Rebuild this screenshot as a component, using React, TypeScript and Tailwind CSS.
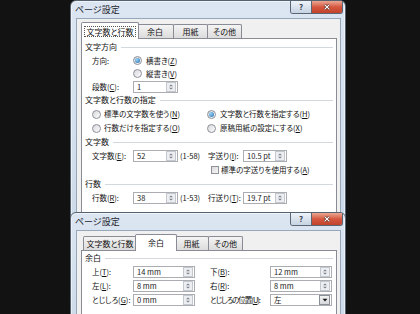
import React from "react";

const jp = "font-['Noto_Sans_CJK_JP','Noto_Sans',sans-serif] [font-feature-settings:'palt']";

function Acc({ t, k, colon }: { t: string; k: string; colon?: boolean }) {
  return (
    <span className="whitespace-nowrap">
      {t}(<span className="underline underline-offset-1">{k}</span>){colon ? ":" : ""}
    </span>
  );
}

function Radio({ on }: { on?: boolean }) {
  return (
    <span className="flex h-[9px] w-[9px] shrink-0 items-center justify-center rounded-full border border-[#8c9099] bg-gradient-to-br from-[#d6d8dc] to-[#fdfdfd]">
      {on && <span className="h-[5px] w-[5px] rounded-full bg-[radial-gradient(circle_at_35%_35%,#9ad6f7,#1d66ad)]" />}
    </span>
  );
}

function Check() {
  return <span className="h-[8px] w-[8px] shrink-0 border border-[#8f9399] bg-gradient-to-br from-[#d9dadc] to-[#f7f7f7]" />;
}

function Spin() {
  return (
    <span className="flex h-[10px] w-[10px] shrink-0 border border-[#c3c7ce] bg-[#eceef1]">
      <svg viewBox="0 0 10 10" className="h-full w-full">
        <path d="M2.5 4.2 L5 1.8 L7.5 4.2Z M2.5 5.8 L5 8.2 L7.5 5.8Z" fill="#7a8290" />
      </svg>
    </span>
  );
}

function Drop() {
  return (
    <span className="flex h-[10px] w-[11px] shrink-0 items-center justify-center border border-[#8a8f98] bg-gradient-to-b from-[#f3f3f3] to-[#d6d8dc]">
      <svg viewBox="0 0 10 10" className="h-[8px] w-[8px]">
        <path d="M2 3.5 L8 3.5 L5 7Z" fill="#111" />
      </svg>
    </span>
  );
}

function Field({ v, w, select }: { v: string; w: string; select?: boolean }) {
  return (
    <div className={`flex h-[12px] shrink-0 items-center justify-between border border-[#abadb3] bg-white pl-[3px] pr-px ${w}`}>
      <span className="text-[7.5px] leading-none text-[#222]">{v}</span>
      {select ? <Drop /> : <Spin />}
    </div>
  );
}

function Heading({ t, h }: { t: string; h: string }) {
  return (
    <div className={`flex items-center gap-[4px] px-[3px] text-[8px] ${h}`}>
      <span>{t}</span>
      <span className="h-px flex-1 bg-[#d3d8de]" />
    </div>
  );
}

function Tabs({ sel }: { sel: number }) {
  const tabs = [
    { t: "文字数と行数", w: "w-[54px]", ws: "w-[58px]" },
    { t: "余白", w: "w-[38px]", ws: "w-[42px]" },
    { t: "用紙", w: "w-[35px]", ws: "w-[39px]" },
    { t: "その他", w: "w-[35px]", ws: "w-[39px]" },
  ];
  return (
    <div className="flex h-[19px] items-end pl-[6px] text-[8px]">
      {tabs.map((tab, i) =>
        i === sel ? (
          <div
            key={i}
            className={`relative z-10 -mx-[2px] -mb-px flex h-[17px] items-center justify-center rounded-t-[2px] border border-b-0 border-[#898c95] bg-white ${tab.ws}`}
          >
            <span className={sel === 0 ? "border border-dotted border-[#555] px-[1px] leading-[9px]" : ""}>{tab.t}</span>
          </div>
        ) : (
          <div
            key={i}
            className={`flex h-[14px] items-center justify-center rounded-t-[2px] border border-b-0 border-[#898c95] bg-gradient-to-b from-[#f4f4f4] to-[#dcdcdc] ${tab.w} ${i > 0 ? "-ml-px" : ""}`}
          >
            {tab.t}
          </div>
        )
      )}
    </div>
  );
}

function Win({ pos, sel, children }: { pos: string; sel: number; children: React.ReactNode }) {
  return (
    <div
      className={`absolute left-[70px] flex w-[276px] flex-col rounded-t-[6px] border border-[#56626f] bg-gradient-to-b from-[#dce6f2] to-[#ccd9e8] shadow-[inset_0_0_0_1px_rgba(255,255,255,0.55)] ${pos}`}
    >
      <div className="flex h-[17px] items-center pl-[4px] text-[9px] text-[#1e2630]">ページ設定</div>
      <div className="absolute right-[2px] top-0 flex h-[13px] overflow-hidden rounded-b-[3px] border border-t-0 border-[#5b6675]">
        <div className="flex w-[20px] items-center justify-center bg-gradient-to-b from-[#eef3f9] to-[#c6d3e2] text-[8px] font-bold text-[#3a4350]">?</div>
        <div className="flex w-[31px] items-center justify-center border-l border-[#5b6675] bg-gradient-to-b from-[#eaa795] via-[#d5573f] to-[#c2432c]">
          <svg viewBox="0 0 12 10" className="h-[8px] w-[10px]">
            <path d="M3 2 L9 8 M9 2 L3 8" stroke="#5a1c12" strokeWidth="3" />
            <path d="M3 2 L9 8 M9 2 L3 8" stroke="#fff" strokeWidth="1.6" />
          </svg>
        </div>
      </div>
      <div className="ml-[5px] mr-[4px] flex flex-1 flex-col border border-[#97a7ba] bg-[#f0f0f0]">
        <Tabs sel={sel} />
        <div className="ml-[4px] mr-[3px] flex-1 border border-[#898c95] bg-white">{children}</div>
      </div>
    </div>
  );
}

function Label({ children, w }: { children?: React.ReactNode; w: string }) {
  return <span className={`shrink-0 whitespace-nowrap ${w}`}>{children}</span>;
}

export default function App() {
  return (
    <div className={`relative h-[314px] w-[420px] overflow-hidden bg-[#121212] text-[7.5px] leading-none text-[#111] ${jp}`}>
      <Win pos="top-0 h-[240px]" sel={0}>
        <div className="pt-px">
          <Heading t="文字方向" h="h-[14px]" />
          <div className="flex h-[13px] items-center pl-[10px]">
            <Label w="w-[41px]">方向:</Label>
            <Radio on />
            <span className="ml-[4px]"><Acc t="横書き" k="Z" /></span>
          </div>
          <div className="flex h-[13px] items-center pl-[10px]">
            <Label w="w-[41px]" />
            <Radio />
            <span className="ml-[4px]"><Acc t="縦書き" k="V" /></span>
          </div>
          <div className="flex h-[13px] items-center pl-[10px]">
            <Label w="w-[41px]"><Acc t="段数" k="C" colon /></Label>
            <Field v="1" w="w-[45px]" />
          </div>
          <Heading t="文字数と行数の指定" h="h-[14px]" />
          <div className="flex h-[14px] items-center pl-[10px]">
            <div className="flex w-[115px] items-center gap-[3px]">
              <Radio />
              <Acc t="標準の文字数を使う" k="N" />
            </div>
            <div className="flex items-center gap-[4px]">
              <Radio on />
              <Acc t="文字数と行数を指定する" k="H" />
            </div>
          </div>
          <div className="flex h-[14px] items-center pl-[10px]">
            <div className="flex w-[115px] items-center gap-[3px]">
              <Radio />
              <Acc t="行数だけを指定する" k="O" />
            </div>
            <div className="flex items-center gap-[4px]">
              <Radio />
              <Acc t="原稿用紙の設定にする" k="X" />
            </div>
          </div>
          <Heading t="文字数" h="h-[14px]" />
          <div className="flex h-[14px] items-center pl-[10px]">
            <Label w="w-[41px]"><Acc t="文字数" k="E" colon /></Label>
            <Field v="52" w="w-[45px]" />
            <Label w="w-[30px] pl-[2px]">(1-58)</Label>
            <Label w="w-[35px]"><Acc t="字送り" k="I" colon /></Label>
            <Field v="10.5 pt" w="w-[44px]" />
          </div>
          <div className="flex h-[14px] items-center gap-[2px] pl-[129px]">
            <Check />
            <Acc t="標準の字送りを使用する" k="A" />
          </div>
          <Heading t="行数" h="h-[14px]" />
          <div className="flex h-[14px] items-center pl-[10px]">
            <Label w="w-[41px]"><Acc t="行数" k="R" colon /></Label>
            <Field v="38" w="w-[45px]" />
            <Label w="w-[30px] pl-[2px]">(1-53)</Label>
            <Label w="w-[35px]"><Acc t="行送り" k="T" colon /></Label>
            <Field v="19.7 pt" w="w-[44px]" />
          </div>
        </div>
      </Win>
      <Win pos="top-[212px] h-[120px]" sel={1}>
        <Heading t="余白" h="h-[14px]" />
        <div className="flex h-[14px] items-center pl-[10px]">
          <Label w="w-[41px]"><Acc t="上" k="T" colon /></Label>
          <Field v="14 mm" w="w-[62px]" />
          <Label w="w-[15px]" />
          <Label w="w-[60px]"><Acc t="下" k="B" colon /></Label>
          <Field v="12 mm" w="w-[62px]" />
        </div>
        <div className="flex h-[14px] items-center pl-[10px]">
          <Label w="w-[41px]"><Acc t="左" k="L" colon /></Label>
          <Field v="8 mm" w="w-[62px]" />
          <Label w="w-[15px]" />
          <Label w="w-[60px]"><Acc t="右" k="R" colon /></Label>
          <Field v="8 mm" w="w-[62px]" />
        </div>
        <div className="flex h-[14px] items-center pl-[10px]">
          <Label w="w-[41px]"><Acc t="とじしろ" k="G" colon /></Label>
          <Field v="0 mm" w="w-[62px]" />
          <Label w="w-[15px]" />
          <Label w="w-[60px] tracking-[-1px]"><Acc t="とじしろの位置" k="U" colon /></Label>
          <Field v="左" w="w-[62px]" select />
        </div>
      </Win>
    </div>
  );
}
